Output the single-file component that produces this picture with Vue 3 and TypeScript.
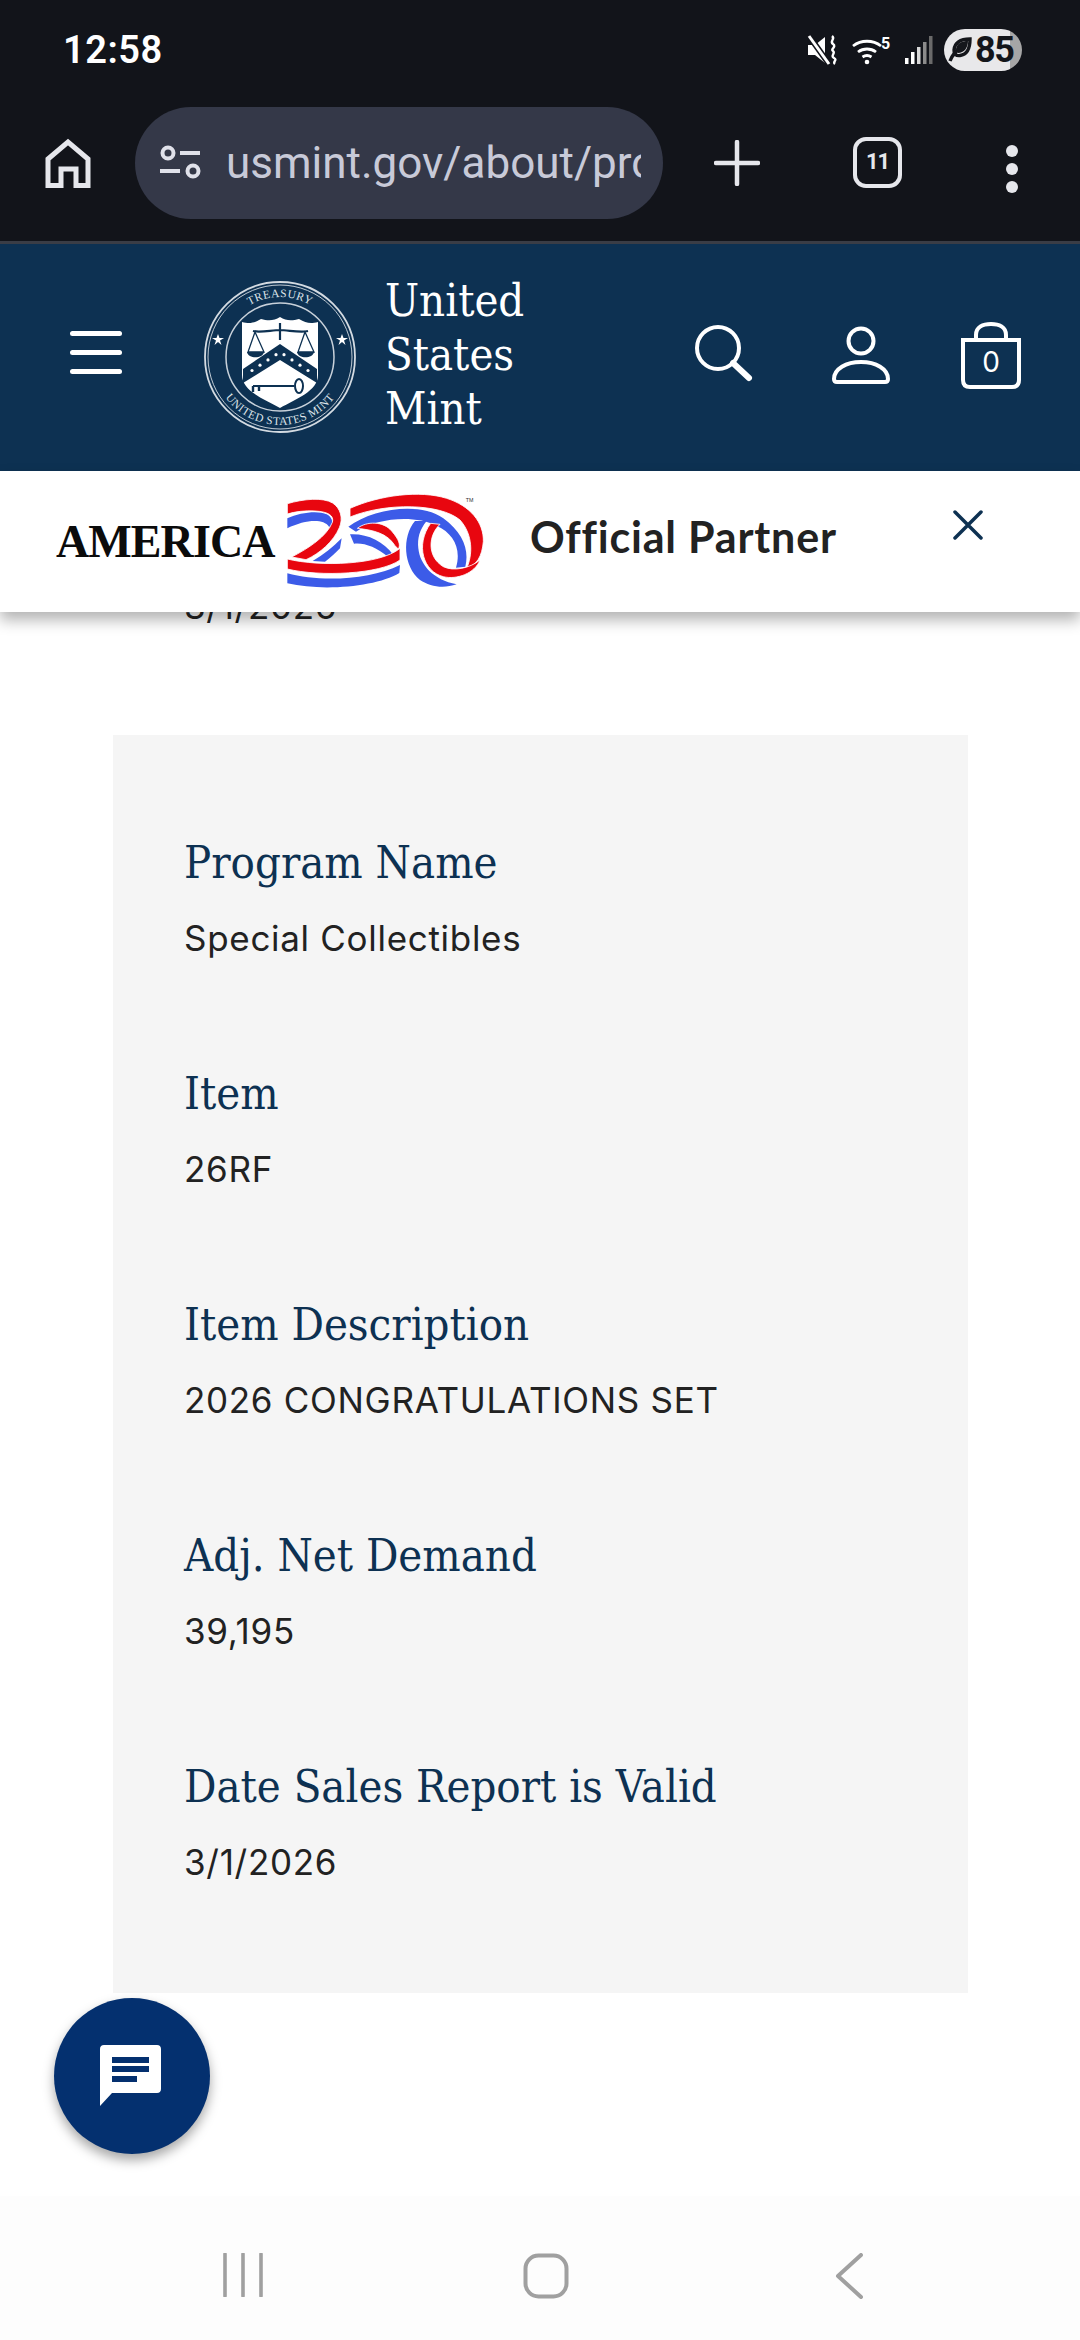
<script setup lang="ts">
interface Row { label: string; value: string }
const rows: Row[] = [
  { label: 'Program Name', value: 'Special Collectibles' },
  { label: 'Item', value: '26RF' },
  { label: 'Item Description', value: '2026 CONGRATULATIONS SET' },
  { label: 'Adj. Net Demand', value: '39,195' },
  { label: 'Date Sales Report is Valid', value: '3/1/2026' },
]
const dots: number[] = [-28, -20, -12, -4, 4, 12, 20, 28]
</script>

<template>
  <div class="screen">
    <div class="status">
      <span class="time">12:58</span>
      <div class="status-icons">
        <svg class="ic-mute" width="32" height="30" viewBox="0 0 32 30">
          <path d="M1 10h7l10-8v26l-10-8H1z" fill="#fff" />
          <path d="M2 1l20 28" stroke="#12141a" stroke-width="6" />
          <path d="M2 1l20 28" stroke="#fff" stroke-width="3" />
          <path d="M25 1c4 3-3 5 1 8s-3 5 0 7 -3 5 1 7 -2 4 1 6" fill="none" stroke="#fff" stroke-width="2.4" />
        </svg>
        <svg class="ic-wifi" width="42" height="30" viewBox="0 0 42 30">
          <path d="M1 11a23 23 0 0 1 28 0M6 17a15 15 0 0 1 18 0M10.500 22a8 8 0 0 1 9 0" fill="none" stroke="#fff" stroke-width="2.800" />
          <circle cx="15" cy="27" r="2.300" fill="#fff" />
          <text x="29" y="14" class="five">5</text>
        </svg>
        <svg class="ic-signal" width="30" height="30" viewBox="0 0 30 30">
          <rect x="1" y="23" width="3.500" height="6" fill="#fff" />
          <rect x="7" y="17" width="3.500" height="12" fill="#fff" />
          <rect x="13" y="12" width="3.500" height="17" fill="#d8d8d8" />
          <rect x="19" y="7" width="3.500" height="22" fill="#8b8b8b" />
          <rect x="25" y="1" width="3.500" height="28" fill="#6a6a6a" />
        </svg>
        <div class="battery">
          <svg width="24" height="26" viewBox="0 0 24 26">
            <path d="M22 2c-8 0-15 2-16 11-.4 4 2 6 6 5.500C20 17.500 22 10 22 2zM2 24c2-6 6-10 12-14" fill="none" stroke="#14161b" stroke-width="3.400" />
            <path d="M20 4c-6 0-11 2-12 8l2 4c6 0 10-5 10-12z" fill="#14161b" />
          </svg>
          <span>85</span>
        </div>
      </div>
    </div>

    <div class="toolbar">
      <svg class="home" width="46" height="50" viewBox="0 0 46 50">
        <path d="M3 47.500V21L23 4l20 17v26.500H31V31H16v16.500z" fill="none" stroke="#e6e7ec" stroke-width="5" />
      </svg>
      <div class="pill">
        <svg width="44" height="36" viewBox="0 0 44 36">
          <circle cx="10" cy="8" r="5.500" fill="none" stroke="#e0e1ea" stroke-width="4" />
          <path d="M22 8h20M2 26h20" stroke="#e0e1ea" stroke-width="4" />
          <circle cx="35" cy="26" r="5.500" fill="none" stroke="#e0e1ea" stroke-width="4" />
        </svg>
        <span class="url">usmint.gov/about/process</span>
      </div>
      <svg class="plus" width="46" height="46" viewBox="0 0 46 46">
        <path d="M23 2v42M2 23h42" stroke="#e6e7ec" stroke-width="4.500" stroke-linecap="round" />
      </svg>
      <div class="tabs">11</div>
      <div class="more"><i></i><i></i><i></i></div>
    </div>

    <header class="site">
      <div class="burger"><i></i><i></i><i></i></div>
      <svg class="seal" width="154" height="154" viewBox="-77 -77 154 154">
        <defs>
          <path id="sealTop" d="M-60 0A60 60 0 0 1 60 0" />
          <path id="sealBottom" d="M-68 0A68 68 0 0 0 68 0" />
        </defs>
        <circle r="75" fill="none" stroke="#d4dbe2" stroke-width="1.800" />
        <circle r="72" fill="none" stroke="#d4dbe2" stroke-width="0.900" />
        <circle r="54" fill="none" stroke="#c8d1da" stroke-width="1.500" />
        <text class="seal-t"><textPath href="#sealTop" startOffset="50%" text-anchor="middle">TREASURY</textPath></text>
        <text class="seal-t"><textPath href="#sealBottom" startOffset="50%" text-anchor="middle">UNITED STATES MINT</textPath></text>
        <polygon points="-62,-23 -60.500,-19 -56,-19 -60,-16.500 -58.500,-12 -62,-15 -65.500,-12 -64,-16.500 -68,-19 -63.500,-19" fill="#fff" />
        <polygon points="62,-23 63.500,-19 68,-19 64,-16.500 65.500,-12 62,-15 58.500,-12 60,-16.500 56,-19 60.500,-19" fill="#fff" />
        <path d="M-38-35C-30-33-26-34-19-38-12-36-6-36 0-40 6-36 12-36 19-38 26-34 30-33 38-35V18C38 34 16 42 0 51-16 42-38 34-38 18Z" fill="#fff" />
        <path d="M-27-26C-20-24-8-27 0-27S20-24 28-26M0-34V-17" fill="none" stroke="#0d3152" stroke-width="2.200" />
        <path d="M-25-25-32-5H-16ZM25-25 18-5H34Z" fill="none" stroke="#0d3152" stroke-width="1.300" />
        <path d="M-33-5C-32 2-17 2-16-5ZM17-5C18 2 33 2 34-5Z" fill="#0d3152" />
        <path d="M0-13 37 12V26L0 3-37 26V12Z" fill="#0d3152" />
        <circle v-for="d in dots" :key="d" :cx="d" :cy="(Math.abs(d) * 0.66 - 5)" r="1.600" fill="#fff" />
        <path d="M-27 29H14" stroke="#0d3152" stroke-width="2" />
        <path d="M-27 29v6M-21 29v5" stroke="#0d3152" stroke-width="2.400" />
        <ellipse cx="19" cy="29" rx="4" ry="7" fill="none" stroke="#0d3152" stroke-width="2" />
      </svg>
      <div class="wordmark">United States Mint</div>
      <svg class="search" width="60" height="60" viewBox="0 0 60 60">
        <circle cx="23" cy="23" r="21" fill="none" stroke="#fff" stroke-width="4" />
        <path d="M38 38l16 15" stroke="#fff" stroke-width="6" stroke-linecap="round" />
      </svg>
      <svg class="user" width="60" height="60" viewBox="0 0 60 60">
        <circle cx="30" cy="15" r="12.500" fill="none" stroke="#fff" stroke-width="4" />
        <path d="M3 53C3 43 15 36 30 36S57 43 57 53C57 55 56 56 54 56H6C4 56 3 55 3 53Z" fill="none" stroke="#fff" stroke-width="4" />
      </svg>
      <svg class="bag" width="62" height="68" viewBox="0 0 62 68">
        <path d="M16 18V13C16 5 23 2 31 2S46 5 46 13V18" fill="none" stroke="#fff" stroke-width="4" />
        <path d="M3 18H59V58C59 63 56 65 52 65H10C6 65 3 63 3 58Z" fill="none" stroke="#fff" stroke-width="4" />
        <text x="31" y="50" class="bag-n">0</text>
      </svg>
    </header>

    <div class="banner">
      <span class="america">AMERICA</span>
      <svg class="logo" width="210" height="110" viewBox="0 0 630 330">
        <g fill="#3c5be8">
          <path d="M22 100C60 82 115 76 140 88 155 96 160 110 155 125L147 125C130 100 75 104 22 130Z" />
          <path d="M185 160 180 190C165 205 150 220 135 230L98 228C130 210 160 185 185 160Z" />
          <path d="M22 265C120 292 270 285 360 240L358 264C290 305 130 320 22 295Z" />
          <path d="M205 125C280 70 420 50 490 100 550 145 568 195 556 245L528 248C545 190 520 145 470 122 400 88 290 100 228 140Z" />
          <path d="M210 148C260 145 310 168 340 210L322 214C290 186 250 172 222 176Z" />
          <path d="M405 108H440C418 135 412 160 415 190 420 240 460 285 530 298 490 312 450 305 420 285 370 245 365 155 405 108Z" />
        </g>
        <g fill="#e8060f" stroke="#fff" stroke-width="2.500">
          <path d="M22 56C70 42 128 36 158 54 182 70 190 100 178 128 160 170 120 205 78 224L35 216C85 190 140 155 157 112 163 92 145 80 105 78 75 76 45 80 22 87Z" />
          <path d="M22 222C120 246 300 240 360 190V225C300 268 120 276 22 252Z" />
          <path d="M210 70C300 30 420 15 500 40 570 62 612 112 610 170 606 215 590 240 560 250 578 210 580 150 540 105 480 55 320 52 210 96Z" />
          <path d="M232 130C260 108 310 108 335 138 358 165 362 180 355 192L345 182C322 145 280 135 232 130Z" />
          <path d="M452 115 480 118C445 150 440 215 490 245 520 260 570 250 600 225 585 265 530 285 490 275 430 260 405 180 452 115Z" />
        </g>
        <text x="557" y="52" class="tm">TM</text>
      </svg>
      <span class="partner">Official Partner</span>
      <svg class="close" width="30" height="30" viewBox="0 0 30 30">
        <path d="M2 2l26 26M28 2L2 28" stroke="#0d3152" stroke-width="3.500" stroke-linecap="round" />
      </svg>
    </div>

    <main class="content">
      <p class="value clipped">3/1/2026</p>
      <section class="card">
        <div v-for="r in rows" :key="r.label" class="row">
          <h3 class="label">{{ r.label }}</h3>
          <p class="value">{{ r.value }}</p>
        </div>
      </section>
      <button class="fab" type="button" aria-label="Chat">
        <svg width="62" height="62" viewBox="0 0 62 62">
          <path d="M4 0H57C59.500 0 61 1.500 61 4V44C61 46.500 59.500 48 57 48H12L0 61V4C0 1.500 1.500 0 4 0Z" fill="#fff" />
          <path d="M12 12H49V18H12ZM12 21H49V27H12ZM12 31H37V37H12Z" fill="#04306f" />
        </svg>
      </button>
    </main>

    <nav class="sysnav">
      <svg width="40" height="44" viewBox="0 0 40 44">
        <path d="M2 1V43M20 1V43M38 1V43" stroke="#a0a0a0" stroke-width="3.600" stroke-linecap="round" />
      </svg>
      <svg width="46" height="46" viewBox="0 0 46 46">
        <rect x="2.500" y="2.500" width="41" height="41" rx="13" fill="none" stroke="#a0a0a0" stroke-width="4" />
      </svg>
      <svg class="back" width="28" height="46" viewBox="0 0 28 46">
        <path d="M26 2 3 23 26 44" fill="none" stroke="#a0a0a0" stroke-width="4" stroke-linecap="round" stroke-linejoin="round" />
      </svg>
    </nav>
  </div>
</template>

<style scoped>
.screen {
  width: 1080px;
  height: 2340px;
  display: flex;
  flex-direction: column;
  overflow: hidden;
  background: #fff;
  position: relative;
  font-family: "Inter", "Liberation Sans", sans-serif;
}
.status {
  height: 100px;
  background: #12141a;
  display: flex;
  align-items: center;
  justify-content: space-between;
  padding: 0 58px 0 63px;
  flex: none;
}
.time {
  font: 600 38px/1 "Roboto", sans-serif;
  color: #fff;
  letter-spacing: 0.5px;
}
.status-icons { display: flex; align-items: center; }
.ic-mute { margin-right: 13px; }
.ic-wifi { margin-right: 10px; }
.ic-signal { margin-right: 10px; }
.five { font: 700 16px "Roboto", sans-serif; fill: #fff; }
.battery {
  width: 78px;
  height: 42px;
  border-radius: 21px;
  background: linear-gradient(90deg, #e8e8ea 0 66px, #a6a6a6 66px);
  display: flex;
  align-items: center;
  padding-left: 4px;
  box-sizing: border-box;
  overflow: hidden;
}
.battery span {
  font: 700 36px/1 "Roboto", sans-serif;
  color: #14161b;
  letter-spacing: -1.500px;
  margin-left: 3px;
}
.toolbar {
  height: 144px;
  box-sizing: border-box;
  background: #12141a;
  border-bottom: 3px solid #3a3d46;
  display: flex;
  align-items: flex-start;
  padding: 7px 0 0 45px;
  flex: none;
}
.home { margin-top: 31px; }
.pill {
  width: 528px;
  height: 112px;
  border-radius: 56px;
  background: #343848;
  margin-left: 44px;
  display: flex;
  align-items: center;
  padding-left: 23px;
  box-sizing: border-box;
}
.url {
  width: 415px;
  margin-left: 24px;
  font: 400 44px/56px "Roboto", sans-serif;
  color: #c8cad8;
  overflow: hidden;
  white-space: nowrap;
}
.plus { margin: 33px 0 0 51px; }
.tabs {
  width: 49px;
  height: 51px;
  box-sizing: border-box;
  border: 4.500px solid #e6e7ec;
  border-radius: 13px;
  margin: 30px 0 0 93px;
  color: #e6e7ec;
  font: 700 22px/42px "Roboto", sans-serif;
  text-align: center;
  letter-spacing: -1px;
}
.more {
  margin: 38px 0 0 104px;
  display: flex;
  flex-direction: column;
  gap: 6px;
}
.more i {
  display: block;
  width: 12px;
  height: 12px;
  border-radius: 50%;
  background: #e6e7ec;
}
.site {
  height: 227px;
  background: #0d3152;
  display: flex;
  align-items: flex-start;
  padding-left: 70px;
  flex: none;
}
.burger {
  width: 52px;
  margin-top: 87px;
  display: flex;
  flex-direction: column;
  gap: 14px;
}
.burger i {
  display: block;
  height: 5px;
  border-radius: 3px;
  background: #fff;
}
.seal { margin: 36px 0 0 81px; flex: none; }
.seal-t {
  font: 400 11.500px "Liberation Serif", serif;
  fill: #dfe5ea;
  letter-spacing: 0.5px;
}
.wordmark {
  width: 200px;
  margin: 30px 0 0 28px;
  font-family: "DejaVu Serif Condensed", "DejaVu Serif", serif;
  font-stretch: condensed;
  font-size: 45px;
  line-height: 54px;
  color: #fff;
  flex: none;
}
.search { margin: 81px 0 0 110px; flex: none; }
.user { margin: 82px 0 0 76px; flex: none; }
.bag { margin: 78px 0 0 69px; flex: none; }
.bag-n {
  font: 400 28px "Inter", sans-serif;
  fill: #fff;
  text-anchor: middle;
}
.banner {
  height: 141px;
  background: #fff;
  display: flex;
  align-items: flex-start;
  padding-left: 56px;
  box-shadow: 0 8px 14px rgba(0, 0, 0, 0.3);
  position: relative;
  z-index: 2;
  flex: none;
}
.america {
  width: 224px;
  flex: none;
  margin-top: 48px;
  font: 700 46px/46px "Liberation Serif", serif;
  letter-spacing: -0.9px;
  color: #0b0b0b;
  white-space: nowrap;
}
.logo { margin-top: 14px; flex: none; }
.tm { font: 400 16px "Liberation Sans", sans-serif; fill: #333; }
.partner {
  margin: 41px 0 0 40px;
  width: 423px;
  flex: none;
  font: 700 43px/50px "Lato", sans-serif;
  letter-spacing: 0.8px;
  color: #222;
  white-space: nowrap;
}
.close { margin-top: 39px; flex: none; }
.content {
  flex: 1;
  min-height: 0;
  position: relative;
  overflow: hidden;
  background: #fff;
}
.clipped { margin: -31px 0 0 184px; }
.card {
  margin: 104px 0 0 113px;
  width: 855px;
  background: #f5f5f5;
  box-sizing: border-box;
  padding: 98px 40px 105px 71px;
  display: flex;
  flex-direction: column;
  gap: 100px;
}
.label {
  margin: 0;
  font-family: "DejaVu Serif Condensed", "DejaVu Serif", serif;
  font-stretch: condensed;
  font-weight: 400;
  font-size: 45px;
  line-height: 60px;
  color: #0d3152;
}
.value {
  font-size: 35px;
  line-height: 50px;
  letter-spacing: 0.7px;
  color: #222;
}
.row .value { margin: 20px 0 0; }
.row { padding-bottom: 1px; }
.clipped.value { margin-bottom: 0; }
.fab {
  position: absolute;
  left: 54px;
  top: 1386px;
  width: 156px;
  height: 156px;
  border: 0;
  padding: 0;
  border-radius: 50%;
  background: #04306f;
  box-shadow: 0 6px 12px rgba(0, 0, 0, 0.35);
  display: flex;
  align-items: center;
  justify-content: center;
}
.fab svg { margin: 0 0 0 -2px; }
.sysnav {
  height: 144px;
  flex: none;
  background: #fdfdfd;
  position: relative;
  display: flex;
  align-items: flex-start;
  padding: 57px 0 0 223px;
  box-sizing: border-box;
  gap: 260px;
}
.back { margin-left: 6px; }
</style>
